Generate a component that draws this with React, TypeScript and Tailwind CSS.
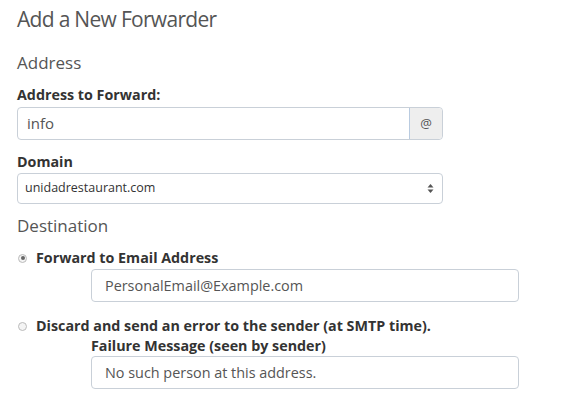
export default function App() {
  return (
    <div
      className="w-[564px] h-[401px] overflow-hidden bg-white px-[17px] text-[#555]"
      style={{ fontFamily: '"Open Sans", sans-serif' }}
    >
      <h1 className="pt-[5px] text-[21px] leading-[28px] font-normal tracking-[-0.7px] text-[#555]">
        Add a New Forwarder
      </h1>
      <h2 className="mt-[18px] text-[17px] leading-[24px] text-[#555]">Address</h2>

      <label className="mt-[10px] block text-[14.3px] leading-[20px] font-bold text-[#333]">
        Address to Forward:
      </label>
      <div className="mt-[2px] flex h-[33px] w-[426px] rounded-[4px] border border-[#c9d0d8]">
        <input
          defaultValue="info"
          className="min-w-0 flex-1 rounded-l-[4px] px-[9px] text-[15px] text-[#555] outline-none"
        />
        <span className="flex w-[33px] items-center justify-center rounded-r-[4px] border-l border-[#b9cbe0] bg-[#eee] text-[13px] text-[#555]">
          @
        </span>
      </div>

      <label className="mt-[12px] block text-[14.3px] leading-[20px] font-bold text-[#333]">
        Domain
      </label>
      <div className="mt-[1px] flex h-[31px] w-[426px] items-center justify-between rounded-[4px] border border-[#c9d0d8] pl-[7px] pr-[8px]">
        <span className="text-[12.5px] text-[#333]">unidadrestaurant.com</span>
        <svg width="7" height="11" viewBox="0 0 7 11">
          <path d="M3.5 1 L6.5 4.5 H0.5 Z" fill="#555" />
          <path d="M3.5 10 L6.5 6.5 H0.5 Z" fill="#555" />
        </svg>
      </div>

      <h2 className="mt-[10px] text-[17px] leading-[24px] text-[#555]">Destination</h2>

      <div className="mt-[10px] flex items-center gap-[9px]">
        <span className="ml-[1px] flex h-[9px] w-[9px] items-center justify-center rounded-full border border-[#bbb] bg-[#f4f4f4]">
          <span className="h-[4px] w-[4px] rounded-full bg-[#666]" />
        </span>
        <span className="text-[14.3px] leading-[20px] font-bold text-[#333]">
          Forward to Email Address
        </span>
      </div>
      <div className="ml-[74px] mt-[1px] flex h-[33px] w-[428px] items-center rounded-[4px] border border-[#c9d0d8] px-[13px] text-[14.4px] text-[#555]">
        PersonalEmail@Example.com
      </div>

      <div className="mt-[14px] flex items-center gap-[9px]">
        <span className="ml-[1px] h-[9px] w-[9px] rounded-full border border-[#bbb] bg-[#f4f4f4]" />
        <span className="text-[14.3px] leading-[20px] font-bold text-[#333]">
          Discard and send an error to the sender (at SMTP time).
        </span>
      </div>
      <div className="ml-[74px]">
        <div className="text-[14.3px] leading-[19px] font-bold text-[#333]">
          Failure Message (seen by sender)
        </div>
        <div className="mt-[1px] flex h-[33px] w-[428px] items-center rounded-[4px] border border-[#c9d0d8] px-[13px] text-[14.4px] text-[#555]">
          No such person at this address.
        </div>
      </div>
    </div>
  );
}
